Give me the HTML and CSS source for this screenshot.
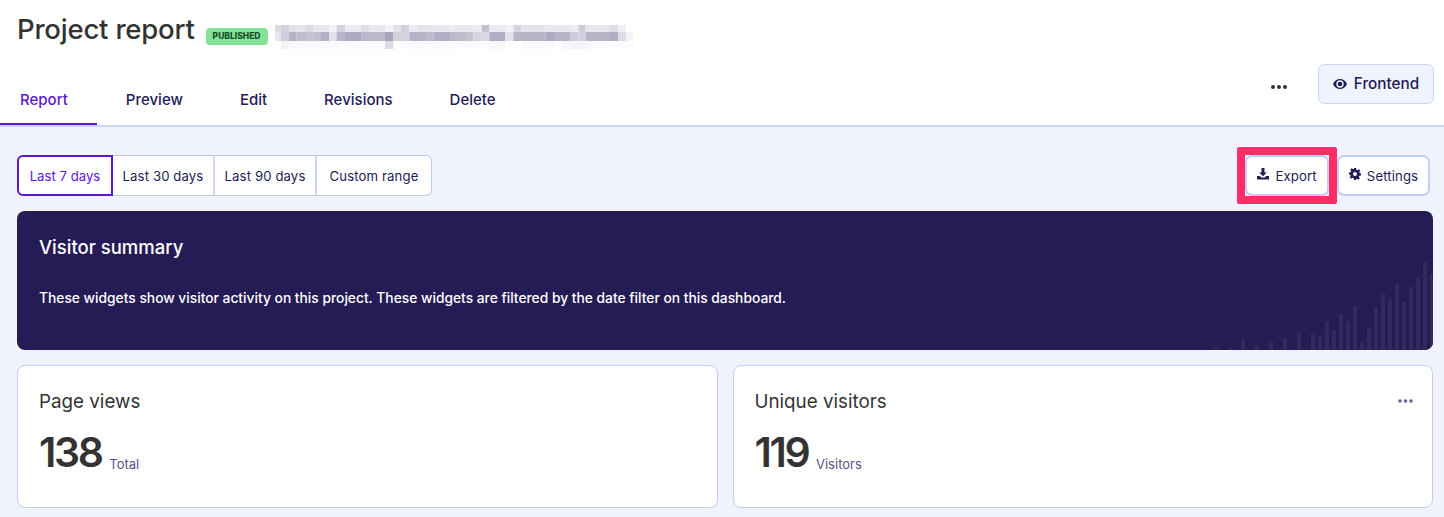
FILE: index.html
```html
<!DOCTYPE html>
<html lang="en">
<head>
<meta charset="utf-8">
<title>Project report</title>
<link rel="stylesheet" href="styles.css">
</head>
<body>
<header class="top">
  <div class="title-row">
    <h1 class="title">Project report</h1>
    <span class="badge">PUBLISHED</span>
    <svg class="mosaic" width="362" height="24" viewBox="0 0 362 24" aria-hidden="true">
      <g transform="translate(-5 0) scale(.3333 1)">
        <rect x="15" y="0" width="18" height="7" fill="#dddbe6"/><rect x="33" y="0" width="24" height="7" fill="#d3d1df"/><rect x="57" y="0" width="23" height="7" fill="#e2e0ea"/><rect x="80" y="0" width="25" height="7" fill="#e4e2eb"/><rect x="105" y="0" width="25" height="7" fill="#ddd9e5"/><rect x="130" y="0" width="48" height="7" fill="#e8e6ee"/><rect x="178" y="0" width="22" height="7" fill="#f3f2f7"/><rect x="200" y="0" width="25" height="7" fill="#d5d2df"/><rect x="225" y="0" width="48" height="7" fill="#eceaf2"/><rect x="273" y="0" width="24" height="7" fill="#e0dee8"/><rect x="297" y="0" width="48" height="7" fill="#e9e7ef"/><rect x="345" y="0" width="25" height="7" fill="#f4f3f8"/><rect x="370" y="0" width="23" height="7" fill="#e4e2eb"/><rect x="393" y="0" width="25" height="7" fill="#d3d0de"/><rect x="418" y="0" width="22" height="7" fill="#eeecf3"/><rect x="440" y="0" width="50" height="7" fill="#e6e4ed"/><rect x="490" y="0" width="50" height="7" fill="#e9e7ef"/><rect x="540" y="0" width="30" height="7" fill="#eeecf3"/>
        <rect x="15" y="7" width="18" height="9" fill="#e8e4f0"/><rect x="33" y="7" width="24" height="9" fill="#cfccdb"/><rect x="57" y="7" width="23" height="9" fill="#b6b2c8"/><rect x="80" y="7" width="25" height="9" fill="#c0bccf"/><rect x="105" y="7" width="25" height="9" fill="#c5c2d2"/><rect x="130" y="7" width="23" height="9" fill="#c2becf"/><rect x="153" y="7" width="25" height="9" fill="#b3afc5"/><rect x="178" y="7" width="22" height="9" fill="#e2e0ea"/><rect x="200" y="7" width="25" height="9" fill="#b9b5c9"/><rect x="225" y="7" width="48" height="9" fill="#aeaac2"/><rect x="273" y="7" width="72" height="9" fill="#bcb8cb"/><rect x="345" y="7" width="25" height="9" fill="#a9a5bd"/><rect x="370" y="7" width="23" height="9" fill="#d2cfdd"/><rect x="393" y="7" width="25" height="9" fill="#d5d3df"/><rect x="418" y="7" width="47" height="9" fill="#b6b2c8"/><rect x="465" y="7" width="25" height="9" fill="#bfbbcd"/><rect x="490" y="7" width="50" height="9" fill="#b3afc5"/><rect x="540" y="7" width="30" height="9" fill="#bcb8ca"/>
        <rect x="33" y="16" width="24" height="8" fill="#f5f4f8"/><rect x="57" y="16" width="288" height="8" fill="#faf9fc"/><rect x="345" y="16" width="25" height="8" fill="#dddbe6"/><rect x="393" y="16" width="177" height="8" fill="#fafafc"/>
      </g>
      <g transform="translate(180 0) scale(.3333 1)">
        <rect x="0" y="0" width="55" height="7" fill="#e8e6ee"/><rect x="55" y="0" width="25" height="7" fill="#eeecf3"/><rect x="80" y="0" width="23" height="7" fill="#c3c0d1"/><rect x="103" y="0" width="47" height="7" fill="#ebe9f1"/><rect x="150" y="0" width="25" height="7" fill="#f3f2f7"/><rect x="175" y="0" width="23" height="7" fill="#d6d3e0"/><rect x="198" y="0" width="72" height="7" fill="#e4e2eb"/><rect x="270" y="0" width="75" height="7" fill="#e9e7ef"/><rect x="345" y="0" width="25" height="7" fill="#eeecf3"/><rect x="370" y="0" width="22" height="7" fill="#d0cddb"/><rect x="392" y="0" width="73" height="7" fill="#e8e6ee"/><rect x="465" y="0" width="25" height="7" fill="#dfdde7"/><rect x="490" y="0" width="23" height="7" fill="#f0eff5"/>
        <rect x="0" y="7" width="30" height="9" fill="#bfbbcd"/><rect x="30" y="7" width="25" height="9" fill="#c5c2d2"/><rect x="55" y="7" width="25" height="9" fill="#d5d3df"/><rect x="80" y="7" width="23" height="9" fill="#d9d7e2"/><rect x="103" y="7" width="47" height="9" fill="#b1adc4"/><rect x="150" y="7" width="25" height="9" fill="#e2e0ea"/><rect x="175" y="7" width="97" height="9" fill="#b9b5c9"/><rect x="272" y="7" width="25" height="9" fill="#aeaac2"/><rect x="297" y="7" width="48" height="9" fill="#b9b5c9"/><rect x="345" y="7" width="25" height="9" fill="#d0cddb"/><rect x="370" y="7" width="22" height="9" fill="#d4d1de"/><rect x="392" y="7" width="73" height="9" fill="#b9b5c9"/><rect x="465" y="7" width="25" height="9" fill="#b1adc4"/><rect x="490" y="7" width="23" height="9" fill="#dcdae5"/><rect x="513" y="7" width="22" height="9" fill="#f5f4f8"/>
        <rect x="0" y="16" width="100" height="8" fill="#fbfafc"/><rect x="100" y="16" width="50" height="8" fill="#f8f7fa"/><rect x="200" y="16" width="100" height="8" fill="#f9f8fb"/><rect x="320" y="16" width="80" height="8" fill="#f6f5f9"/><rect x="400" y="16" width="135" height="8" fill="#fbfafc"/>
      </g>
    </svg>
  </div>
  <div class="nav-row">
    <nav class="tabs">
      <a class="tab tab-active">Report</a>
      <a class="tab">Preview</a>
      <a class="tab">Edit</a>
      <a class="tab">Revisions</a>
      <a class="tab">Delete</a>
    </nav>
    <div class="nav-actions">
      <svg class="more-dark" width="18" height="6" viewBox="0 0 18 6" aria-hidden="true"><circle cx="3" cy="3" r="2"/><circle cx="9" cy="3" r="2"/><circle cx="15" cy="3" r="2"/></svg>
      <button class="frontend">
        <svg width="14" height="10" viewBox="0 0 14 10" aria-hidden="true"><path fill-rule="evenodd" d="M7 0C4 0 1.500 1.800 0 5c1.500 3.200 4 5 7 5s5.500-1.800 7-5c-1.500-3.200-4-5-7-5zm0 1.300a3.700 3.700 0 1 1 0 7.400 3.700 3.700 0 0 1 0-7.400z"/><circle cx="7" cy="5" r="2.300"/></svg>
        <span class="frontend-label">Frontend</span>
      </button>
    </div>
  </div>
</header>
<main class="content">
  <div class="toolbar">
    <div class="segments">
      <button class="segment segment-active">Last 7 days</button>
      <button class="segment">Last 30 days</button>
      <button class="segment">Last 90 days</button>
      <button class="segment">Custom range</button>
    </div>
    <div class="tools">
      <div class="highlight-wrap">
        <button class="tool tool-export">
          <svg width="12" height="12" viewBox="0 0 12 12" aria-hidden="true"><path d="M4.500 0h3v4.500h2.300L6 8.300 2.200 4.500h2.300z"/><path d="M0 8h2.800L4.500 9.500h3L9.200 8H12v3.500H0z"/></svg>
          Export
        </button>
        <span class="highlight"></span>
      </div>
      <button class="tool">
        <svg width="12" height="12" viewBox="0 0 24 24" aria-hidden="true"><path fill-rule="evenodd" d="M10 0h4l.7 3.400 2.200.9L19.800 2.400l2.800 2.800-1.900 2.900.9 2.200L24 11v4l-3.400.5-.9 2.200 1.900 2.900-2.800 2.800-2.900-1.900-2.200.9L13.900 24h-4l-.6-3.400-2.200-.9-2.900 1.900-2.800-2.800 1.900-2.900-.9-2.200L0 13.100v-4l3.400-.6.900-2.200-1.900-2.900L5.200 .6l2.900 1.900 2.200-.9zM12 8a4 4 0 1 0 0 8 4 4 0 0 0 0-8z"/></svg>
        Settings
      </button>
    </div>
  </div>

  <section class="banner">
    <h2 class="banner-title">Visitor summary</h2>
    <p class="banner-text">These widgets show visitor activity on this project. These widgets are filtered by the date filter on this dashboard.</p>
    <svg class="bars" width="240" height="90" viewBox="0 0 240 90" aria-hidden="true">
      <g transform="translate(18 0)">
      <rect x="3" y="88" width="4" height="2"/><rect x="17" y="88" width="4" height="2"/>
      <rect x="30" y="79" width="4" height="11"/><rect x="44" y="85" width="4" height="5"/>
      <rect x="58" y="81" width="4" height="9"/><rect x="72" y="78" width="4" height="12"/>
      <rect x="86" y="73" width="4" height="17"/><rect x="100" y="73" width="4" height="17"/>
      <rect x="107" y="76" width="4" height="14"/><rect x="114" y="61" width="4" height="29"/>
      <rect x="121" y="70" width="4" height="20"/><rect x="128" y="54" width="4" height="36"/>
      <rect x="135" y="61" width="4" height="29"/><rect x="142" y="46" width="4" height="44"/>
      <rect x="149" y="83" width="4" height="7"/><rect x="156" y="68" width="4" height="22"/>
      <rect x="163" y="47" width="4" height="43"/><rect x="170" y="33" width="4" height="57"/>
      <rect x="177" y="39" width="4" height="51"/><rect x="184" y="24" width="4" height="66"/>
      <rect x="191" y="42" width="4" height="48"/><rect x="198" y="27" width="4" height="63"/>
      <rect x="205" y="17" width="4" height="73"/><rect x="212" y="2" width="4" height="88"/>
      <rect x="219" y="14" width="4" height="76"/>
      </g>
    </svg>
  </section>

  <div class="cards">
    <article class="card">
      <h3 class="card-title">Page views</h3>
      <div class="metric"><span class="metric-value">138</span><span class="metric-unit">Total</span></div>
    </article>
    <article class="card">
      <h3 class="card-title">Unique visitors</h3>
      <svg class="more-light" width="15" height="4" viewBox="0 0 15 4" aria-hidden="true"><circle cx="2" cy="2" r="1.800"/><circle cx="7.500" cy="2" r="1.800"/><circle cx="13" cy="2" r="1.800"/></svg>
      <div class="metric"><span class="metric-value">119</span><span class="metric-unit">Visitors</span></div>
    </article>
  </div>
</main>
</body>
</html>
```
FILE: styles.css
```css
* { box-sizing: border-box; }
html, body { margin: 0; height: 100%; }
body {
  font-family: "Inter", "Liberation Sans", sans-serif;
  color: #241c55;
  background: #f0f3fd;
  overflow: hidden;
}
button { font-family: inherit; cursor: pointer; }
h1, h2, h3, p { margin: 0; }

.top {
  height: 127px;
  background: #fff;
  border-bottom: 2px solid #cdd5f6;
  display: flex;
  flex-direction: column;
}
.title-row {
  display: flex;
  align-items: center;
  height: 60px;
  padding-left: 17px;
}
.title {
  font-size: 27.500px;
  font-weight: 500;
  color: #333;
  letter-spacing: -0.2px;
  line-height: 60px;
  margin-bottom: 2px;
}
.badge {
  margin-left: 11px;
  margin-top: 12px;
  width: 62px;
  height: 17px;
  background: #84e296;
  border-radius: 4px;
  color: #14502a;
  font-size: 8.500px;
  font-weight: 800;
  line-height: 17px;
  text-align: center;
}
.mosaic { margin-left: 7px; margin-top: 14px; filter: blur(.6px); }

.nav-row {
  flex: 1;
  display: flex;
  justify-content: space-between;
  align-items: stretch;
}
.tabs { display: flex; align-items: stretch; }
.tab {
  display: flex;
  align-items: center;
  padding: 13px 28.500px 0;
  font-size: 15px;
  font-weight: 500;
  height: 65px;
}
.tab-active {
  color: #5a17d6;
  box-shadow: inset 0 -2px 0 #5a17d6;
  padding-left: 20px;
  padding-right: 29.500px;
}
.nav-actions {
  display: flex;
  align-items: flex-start;
  gap: 30px;
  padding: 4px 10px 0 0;
}
.more-dark { fill: #333; margin-top: 20px; }
.frontend {
  width: 116px;
  height: 40px;
  display: flex;
  align-items: center;
  justify-content: center;
  gap: 7px;
  background: #f0f3fd;
  border: 1px solid #cdd5f6;
  border-radius: 6px;
  color: #241c55;
  font-size: 15.300px;
  font-weight: 500;
}
.frontend svg { fill: #241c55; }
.frontend-label { margin-top: -2px; }

.content { padding: 28px 11px 0 17px; }
.toolbar {
  display: flex;
  justify-content: space-between;
  height: 41px;
}
.segments { display: flex; }
.segment {
  height: 41px;
  background: #fff;
  border: 1px solid #bcc8f4;
  border-left-width: 0;
  border-right: 2px solid #cdd6f7;
  padding: 0;
  color: #241c55;
  font-size: 13.200px;
  letter-spacing: .1px;
  font-weight: 400;
  width: 103px;
}
.segment:nth-child(2) { width: 102px; }
.segment:nth-child(3) { width: 102px; }
.segment:last-child {
  width: 115px;
  border-right: 1px solid #bcc8f4;
  border-radius: 0 6px 6px 0;
}
.segment-active {
  width: 96px;
  color: #5a17d6;
  letter-spacing: 0;
  border: 2px solid #5a17d6;
  border-radius: 6px 0 0 6px;
}
.tools { display: flex; padding-right: 3px; }
.highlight-wrap { position: relative; margin-right: 8px; }
.highlight {
  position: absolute;
  left: -8px;
  top: -8px;
  right: -8px;
  bottom: -8px;
  border: 8px solid #fb2d67;
  border-radius: 2px;
  pointer-events: none;
}
.tool {
  height: 41px;
  width: 93px;
  display: flex;
  align-items: center;
  justify-content: center;
  gap: 6px;
  background: #fff;
  border: 2px solid #c3cdf5;
  border-radius: 7px;
  color: #241c55;
  font-size: 13.200px;
  letter-spacing: .1px;
}
.tool svg { fill: #241c55; margin-top: -3px; }
.tool-export { width: 84px; }

.banner {
  position: relative;
  overflow: hidden;
  margin-top: 15px;
  height: 139px;
  background: #261c55;
  border-radius: 8px;
  color: #fff;
  padding: 23px 22px;
}
.banner-title {
  font-size: 18.500px;
  font-weight: 500;
  line-height: 26px;
}
.banner-text {
  margin-top: 28px;
  font-size: 13.800px;
  font-weight: 500;
  line-height: 20px;
}
.bars {
  position: absolute;
  right: 0;
  bottom: 0;
  fill: #32295f;
}

.cards {
  display: grid;
  grid-template-columns: 1fr 1fr;
  gap: 15px;
  margin-top: 15px;
}
.card {
  position: relative;
  height: 143px;
  background: #fff;
  border: 1px solid #c3cdf5;
  border-radius: 8px;
  padding: 23px 21px;
}
.card-title {
  font-size: 18.800px;
  font-weight: 400;
  color: #333;
  line-height: 26px;
}
.more-light {
  position: absolute;
  top: 33px;
  right: 19px;
  fill: #6a6392;
}
.metric {
  display: flex;
  align-items: flex-end;
  margin-top: 12px;
}
.metric-value {
  font-size: 41px;
  font-weight: 600;
  color: #333;
  letter-spacing: -2.300px;
  line-height: 50px;
}
.metric-unit {
  margin-left: 7.500px;
  padding-bottom: 5px;
  font-size: 13px;
  line-height: 16px;
  color: #5a5288;
}
```
